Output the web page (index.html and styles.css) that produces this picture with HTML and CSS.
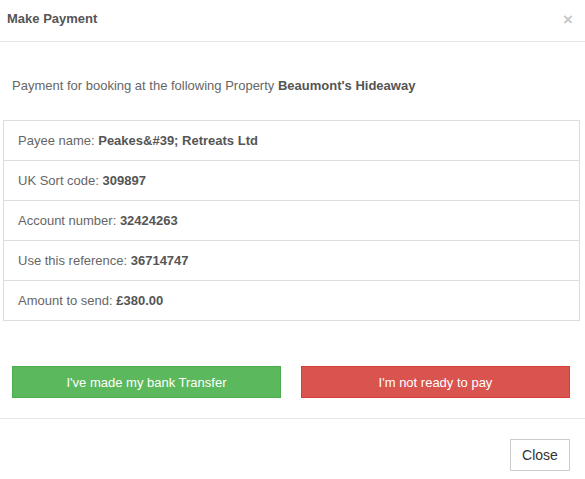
FILE: index.html
```html
<!DOCTYPE html>
<html>
<head>
<meta charset="utf-8">
<link rel="stylesheet" href="styles.css">
</head>
<body>
<div class="modal">
  <div class="modal-header">
    <h4 class="modal-title">Make Payment</h4>
    <span class="close">&times;</span>
  </div>
  <div class="modal-body">
    <p class="intro">Payment for booking at the following Property <b>Beaumont's Hideaway</b></p>
    <ul class="list">
      <li>Payee name: <b>Peakes&amp;#39; Retreats Ltd</b></li>
      <li>UK Sort code: <b>309897</b></li>
      <li>Account number: <b>32424263</b></li>
      <li>Use this reference: <b>36714747</b></li>
      <li>Amount to send: <b>£380.00</b></li>
    </ul>
    <div class="actions">
      <button class="btn btn-success">I've made my bank Transfer</button>
      <button class="btn btn-danger">I'm not ready to pay</button>
    </div>
  </div>
  <div class="modal-footer">
    <button class="btn btn-default">Close</button>
  </div>
</div>
</body>
</html>
```
FILE: styles.css
```css
html, body {
  margin: 0;
  padding: 0;
  background: #fff;
}
body {
  font-family: "Liberation Sans", Arial, Helvetica, sans-serif;
  font-size: 13px;
  color: #666;
}
.modal {
  width: 585px;
}
.modal-header {
  height: 41px;
  border-bottom: 1px solid #e5e5e5;
  display: flex;
  align-items: center;
  justify-content: space-between;
  padding: 0 12px 5px 7px;
  box-sizing: border-box;
  height: 42px;
}
.modal-title {
  margin: 0;
  font-size: 13px;
  font-weight: bold;
  color: #555;
}
.close {
  font-size: 17px;
  font-weight: bold;
  color: #000;
  opacity: 0.22;
  line-height: 1;
  margin-top: 3px;
}
.modal-body {
  padding: 0;
}
.intro {
  margin: 0;
  padding: 35px 12px 0 12px;
  height: 43px;
  line-height: 18px;
}
.intro b, .list b {
  color: #555;
}
.list {
  list-style: none;
  margin: 0 5px 0 3px;
  padding: 0;
  border: 1px solid #ddd;
}
.list li {
  height: 39px;
  line-height: 39px;
  padding: 0 14px;
  border-top: 1px solid #ddd;
}
.list li:first-child {
  border-top: none;
}
.actions {
  display: flex;
  gap: 20px;
  padding: 45px 15px 20px 12px;
  border-bottom: 1px solid #e5e5e5;
}
.btn {
  font-family: "Liberation Sans", Arial, Helvetica, sans-serif;
  font-size: 13px;
  border: 1px solid transparent;
  border-radius: 0;
  cursor: pointer;
}
.actions .btn {
  flex: 1;
  height: 32px;
  color: #fff;
}
.btn-success {
  background: #5cb85c;
  border-color: #4cae4c;
}
.btn-danger {
  background: #d9534f;
  border-color: #d43f3a;
}
.modal-footer {
  display: flex;
  justify-content: flex-end;
  padding: 20px 15px 0 0;
}
.btn-default {
  background: #fff;
  border-color: #ccc;
  color: #333;
  width: 60px;
  height: 32px;
  font-size: 14px;
}
```
